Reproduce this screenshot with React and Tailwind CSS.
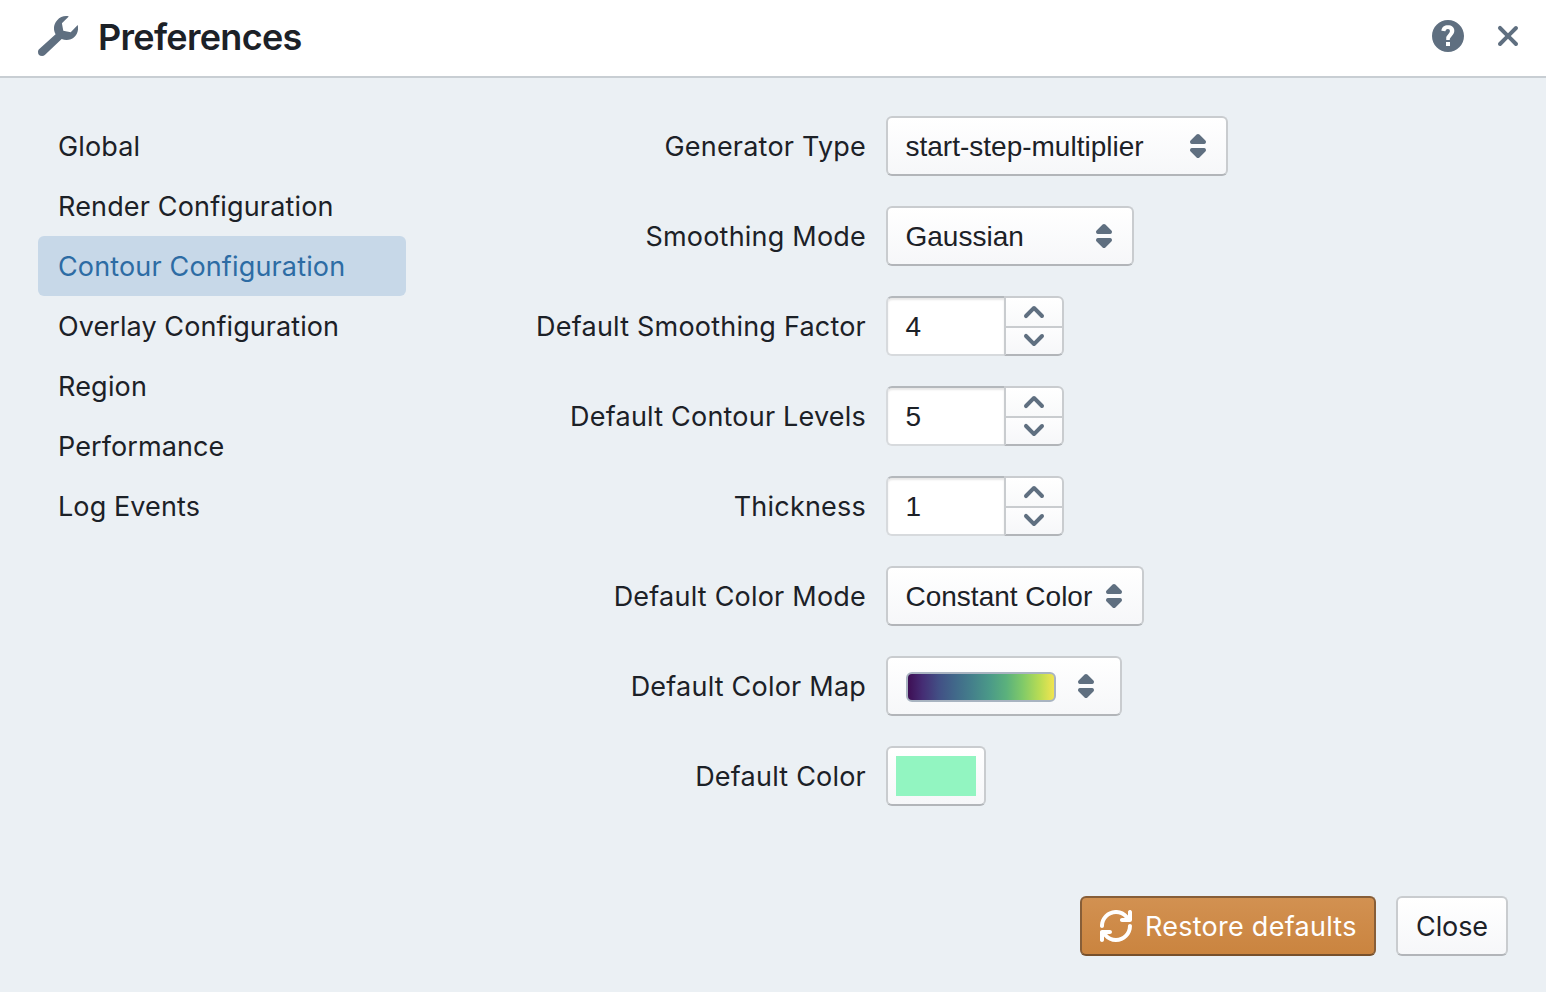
import React from 'react';

const NAV = [
  { label: 'Global', tracking: 'tracking-[0.15px]' },
  { label: 'Render Configuration', tracking: 'tracking-[0.16px]' },
  { label: 'Contour Configuration', tracking: 'tracking-[0.15px]', active: true },
  { label: 'Overlay Configuration', tracking: 'tracking-[0.08px]' },
  { label: 'Region', tracking: 'tracking-[0.2px]' },
  { label: 'Performance', tracking: 'tracking-[0.1px]' },
  { label: 'Log Events', tracking: 'tracking-[0.1px]' },
];

const BUTTON =
  'rounded-[6px] border-2 border-[#c9cccf] border-b-[#b2b5b9] bg-linear-to-b from-white to-[#f6f7f9]';

function Icon({ size = 16, className = 'h-8 w-8', d }) {
  return (
    <svg viewBox={`0 0 ${size} ${size}`} className={`shrink-0 fill-current ${className}`} aria-hidden="true">
      <path fillRule="evenodd" d={d} />
    </svg>
  );
}

const ICONS = {
  wrench:
    'M15.4.2 11.95 3.6l.7 3.8 3.7.7 3.5-3.6c.5 2.15-.05 4.4-1.55 5.85-1.7 1.65-4.25 2.05-6.45 1.1L3.4 19.5c-.35.3-.8.5-1.35.5A2.05 2.05 0 0 1 0 17.95c0-.55.25-1.05.65-1.4L8.8 9.1C7.45 6.7 7.8 4 9.6 2.1 11.1.4 13.3-.3 15.4.2Z',
  help:
    'M8 0C3.58 0 0 3.58 0 8s3.58 8 8 8 8-3.58 8-8-3.58-8-8-8zM7 13v-2h2v2H7zm3.93-6.52c-.14.32-.35.64-.62.97L9.25 8.83c-.12.15-.24.29-.28.42-.04.13-.09.3-.09.52V10H7.12V8.88s.05-.51.21-.71L8.4 6.73c.22-.26.35-.49.44-.68.09-.19.12-.38.12-.58 0-.3-.1-.55-.28-.75-.18-.19-.44-.28-.76-.28-.33 0-.59.1-.78.29-.19.19-.33.46-.4.81-.03.11-.1.15-.2.14l-1.7-.25c-.12-.01-.16-.08-.14-.19.12-.82.46-1.47 1.03-1.94.57-.48 1.32-.72 2.25-.72.47 0 .9.07 1.29.22s.72.34 1 .59c.28.25.49.55.65.89.15.35.22.72.22 1.12s-.07.75-.21 1.08z',
  cross:
    'M11.41 10l3.29-3.29c.19-.18.3-.43.3-.71a1.003 1.003 0 00-1.71-.71L10 8.59l-3.29-3.3a1.003 1.003 0 00-1.42 1.42L8.59 10 5.3 13.29c-.19.18-.3.43-.3.71a1.003 1.003 0 001.71.71l3.29-3.3 3.29 3.29c.18.19.43.3.71.3a1.003 1.003 0 00.71-1.71L11.41 10z',
  caret:
    'M5 7h6a1.003 1.003 0 00.71-1.71l-3-3C8.53 2.11 8.28 2 8 2s-.53.11-.71.29l-3 3A1.003 1.003 0 005 7zm6 2H5a1.003 1.003 0 00-.71 1.71l3 3c.18.18.43.29.71.29s.53-.11.71-.29l3-3A1.003 1.003 0 0011 9z',
  up: 'M12.71 9.29l-4-4C8.53 5.11 8.28 5 8 5s-.53.11-.71.29l-4 4a1.003 1.003 0 001.42 1.42L8 7.41l3.29 3.29c.18.19.43.3.71.3a1.003 1.003 0 00.71-1.71z',
  down: 'M12 5c-.28 0-.53.11-.71.29L8 8.59l-3.29-3.3a1.003 1.003 0 00-1.42 1.42l4 4c.18.18.43.29.71.29s.53-.11.71-.29l4-4A1.003 1.003 0 0012 5z',
  refresh:
    'M14.99 6.99c-.55 0-1 .45-1 1 0 3.31-2.69 6-6 6-1.77 0-3.36-.78-4.46-2h1.46c.55 0 1-.45 1-1s-.45-1-1-1h-4c-.55 0-1 .45-1 1v4c0 .55.45 1 1 1s1-.45 1-1v-1.74a7.95 7.95 0 006 2.74c4.42 0 8-3.58 8-8 0-.55-.45-1-1-1zm0-7c-.55 0-1 .45-1 1v1.74a7.95 7.95 0 00-6-2.74c-4.42 0-8 3.58-8 8 0 .55.45 1 1 1s1-.45 1-1c0-3.31 2.69-6 6-6 1.77 0 3.36.78 4.46 2h-1.46c-.55 0-1 .45-1 1s.45 1 1 1h4c.55 0 1-.45 1-1v-4c0-.55-.45-1-1-1z',
};

function Row({ label, children }) {
  return (
    <div className="flex h-[60px] items-center">
      <label className="w-[420px] pt-[2px] pr-5 text-right tracking-[0.21px]">{label}</label>
      {children}
    </div>
  );
}

function Select({ value, width }) {
  return (
    <button
      type="button"
      className={`flex h-[60px] items-center justify-between pr-3 pl-[17.5px] font-['Liberation_Sans',Arial,sans-serif] text-[28px] ${BUTTON} ${width}`}
    >
      <span className="pt-[2px] whitespace-nowrap">{value}</span>
      <Icon d={ICONS.caret} className="h-8 w-8 text-[#5f6f80]" />
    </button>
  );
}

function NumberInput({ value }) {
  return (
    <div className="flex h-[60px] w-[178px]">
      <div className="flex w-[118px] items-center rounded-l-[6px] border-2 border-r-0 border-[#d7dadd] border-t-[#b4b8bc] bg-white pt-[2px] pl-[17.5px] font-['Liberation_Sans',Arial,sans-serif] text-[28px] shadow-[inset_0_2px_2px_rgba(17,20,24,0.1)]">
        {value}
      </div>
      <div className="flex w-[60px] flex-col text-[#5f6f80]">
        <button
          type="button"
          className="flex h-8 items-center justify-center rounded-tr-[6px] border-2 border-[#c9cccf] bg-linear-to-b from-white to-[#f8f9fa]"
        >
          <Icon d={ICONS.up} />
        </button>
        <button
          type="button"
          className="flex h-7 items-center justify-center rounded-br-[6px] border-2 border-t-0 border-[#c9cccf] border-b-[#b2b5b9] bg-linear-to-b from-[#fdfdfe] to-[#f6f7f9] pb-[2px]"
        >
          <Icon d={ICONS.down} />
        </button>
      </div>
    </div>
  );
}

export default function App() {
  return (
    <div className="flex h-[992px] w-[1546px] flex-col overflow-hidden bg-[#ebf0f4] font-[Inter,sans-serif] text-[27px] leading-[36px] text-[#1c2127]">
      <header className="flex h-[78px] shrink-0 items-center border-b-2 border-[#c8ced3] bg-white pr-[18px] pb-1 pl-[38px]">
        <Icon size={20} d={ICONS.wrench} className="h-10 w-10 text-[#5f6f80]" />
        <h1 className="ml-5 flex-1 pt-[2px] text-[36px] font-semibold tracking-[-0.7px]">Preferences</h1>
        <div className="flex items-center gap-6 text-[#5f6f80]">
          <Icon d={ICONS.help} />
          <Icon size={20} d={ICONS.cross} className="h-10 w-10" />
        </div>
      </header>

      <main className="flex flex-1 pt-[38px] pl-[38px]">
        <nav className="flex w-[368px] flex-col">
          {NAV.map(({ label, tracking, active }) => (
            <a
              key={label}
              className={`flex h-[60px] items-center rounded-[6px] pt-[2px] pl-5 ${tracking} ${
                active ? 'bg-[#c7d8e8] text-[#2d6ca4]' : ''
              }`}
            >
              {label}
            </a>
          ))}
        </nav>

        <form className="ml-[60px] flex flex-col gap-[30px]">
          <Row label="Generator Type">
            <Select value="start-step-multiplier" width="w-[342px]" />
          </Row>
          <Row label="Smoothing Mode">
            <Select value="Gaussian" width="w-[248px]" />
          </Row>
          <Row label="Default Smoothing Factor">
            <NumberInput value="4" />
          </Row>
          <Row label="Default Contour Levels">
            <NumberInput value="5" />
          </Row>
          <Row label="Thickness">
            <NumberInput value="1" />
          </Row>
          <Row label="Default Color Mode">
            <Select value="Constant Color" width="w-[258px]" />
          </Row>
          <Row label="Default Color Map">
            <button
              type="button"
              className={`flex h-[60px] w-[236px] items-center justify-between pr-[18px] pl-[18px] ${BUTTON}`}
            >
              <span className="mt-[2px] h-[30px] w-[150px] rounded-[6px] border-2 border-[#a9b4c1] bg-[linear-gradient(to_right,#3d0a50,#452d74_11%,#425085_22%,#41698a_33%,#44808b_44%,#4b9a88_56%,#5bb17c_67%,#81ca68_78%,#b8dc54_89%,#f9e650)] bg-origin-border" />
              <Icon d={ICONS.caret} className="h-8 w-8 text-[#5f6f80]" />
            </button>
          </Row>
          <Row label="Default Color">
            <button type="button" className={`flex h-[60px] w-[100px] items-center justify-center ${BUTTON}`}>
              <span className="h-10 w-20 bg-[#92f5c1]" />
            </button>
          </Row>
        </form>
      </main>

      <footer className="flex shrink-0 justify-end gap-5 pr-[38px] pb-9">
        <button
          type="button"
          className="flex h-[60px] w-[296px] items-center rounded-[6px] border-2 border-[#875e38] border-b-[#77502c] bg-linear-to-b from-[#d29151] to-[#ca843f] pl-[18px] text-white"
        >
          <Icon d={ICONS.refresh} />
          <span className="ml-[13px] pt-[2px] whitespace-nowrap tracking-[0.26px]">Restore defaults</span>
        </button>
        <button type="button" className={`h-[60px] w-[112px] pt-[2px] tracking-[-0.1px] ${BUTTON}`}>
          Close
        </button>
      </footer>
    </div>
  );
}
